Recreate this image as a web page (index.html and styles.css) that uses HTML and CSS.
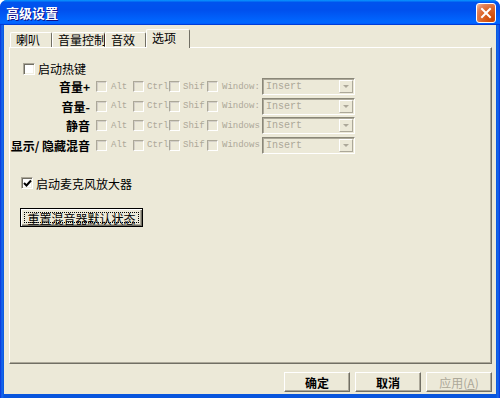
FILE: index.html
```html
<!DOCTYPE html>
<html lang="zh-CN">
<head>
    <meta charset="UTF-8">
    <title>高级设置</title>
    <link rel="stylesheet" href="styles.css">
</head>
<body>
    <div class="window">
        <div class="titlebar">
            <span class="title">高级设置</span>
            <span class="close">
                <svg width="12" height="12" viewBox="0 0 12 12">
                    <path d="M2 2 L10 10 M10 2 L2 10" stroke="#fff" stroke-width="2" stroke-linecap="square"/>
                </svg>
            </span>
        </div>
        <div class="client">
            <div class="tabs">
                <div class="tab t1">喇叭</div>
                <div class="tab t2">音量控制</div>
                <div class="tab t3">音效</div>
                <div class="tab active">选项</div>
            </div>
            <div class="panel">
                <label class="check-line hot"><span class="box"></span>启动热键</label>

                <div class="hotkeys">
                    <div class="hk-label">音量+</div>
                    <div class="opt w1"><span class="box dis"></span>Alt</div>
                    <div class="opt w2"><span class="box dis"></span>Ctrl</div>
                    <div class="opt w3"><span class="box dis"></span>Shif</div>
                    <div class="opt w4"><span class="box dis"></span>Window:</div>
                    <div class="combo"><span class="combo-text">Insert</span><span class="combo-btn"><span class="arrow"></span></span></div>

                    <div class="hk-label">音量-</div>
                    <div class="opt w1"><span class="box dis"></span>Alt</div>
                    <div class="opt w2"><span class="box dis"></span>Ctrl</div>
                    <div class="opt w3"><span class="box dis"></span>Shif</div>
                    <div class="opt w4"><span class="box dis"></span>Window:</div>
                    <div class="combo"><span class="combo-text">Insert</span><span class="combo-btn"><span class="arrow"></span></span></div>

                    <div class="hk-label">静音</div>
                    <div class="opt w1"><span class="box dis"></span>Alt</div>
                    <div class="opt w2"><span class="box dis"></span>Ctrl</div>
                    <div class="opt w3"><span class="box dis"></span>Shif</div>
                    <div class="opt w4"><span class="box dis"></span>Windows</div>
                    <div class="combo"><span class="combo-text">Insert</span><span class="combo-btn"><span class="arrow"></span></span></div>

                    <div class="hk-label">显示/ 隐藏混音</div>
                    <div class="opt w1"><span class="box dis"></span>Alt</div>
                    <div class="opt w2"><span class="box dis"></span>Ctrl</div>
                    <div class="opt w3"><span class="box dis"></span>Shif</div>
                    <div class="opt w4"><span class="box dis"></span>Windows</div>
                    <div class="combo"><span class="combo-text">Insert</span><span class="combo-btn"><span class="arrow"></span></span></div>
                </div>

                <label class="check-line mic">
                    <span class="box">
                        <svg width="9" height="9" viewBox="0 0 9 9">
                            <path d="M1 4 L3.5 6.5 L8 1.5" stroke="#000" stroke-width="2" fill="none"/>
                        </svg>
                    </span>启动麦克风放大器
                </label>

                <button class="reset"><span class="focus">重置混音器默认状态</span></button>
            </div>
            <div class="actions">
                <button class="btn">确定</button>
                <button class="btn">取消</button>
                <button class="btn" disabled>应用(<u>A</u>)</button>
            </div>
        </div>
    </div>
</body>
</html>
```

FILE: styles.css
```css
* {
    box-sizing: border-box;
}
body {
    margin: 0;
    background: #fff;
    font-family: "Noto Sans CJK SC", sans-serif;
    font-size: 12px;
    color: #000;
}
.window {
    width: 500px;
    height: 398px;
    display: flex;
    flex-direction: column;
    background: linear-gradient(to right, #0831d9 0, #166aee 2px, #0855dd 4px, #0855dd 496px, #166aee 498px, #0831d9 500px);
    border-radius: 7px 7px 0 0;
    overflow: hidden;
}
.titlebar {
    height: 25px;
    flex: none;
    display: flex;
    align-items: center;
    justify-content: space-between;
    padding: 0 4px 0 6px;
    background: linear-gradient(to bottom, #0997ff 0%, #0053ee 10%, #0050ee 40%, #0066ff 85%, #0066ff 92%, #005bff 95%, #003dd7 97%, #003dd7 100%);
}
.title {
    color: #fff;
    font-weight: bold;
    font-size: 13px;
    text-shadow: 1px 1px #0f1089;
}
.close {
    width: 20px;
    height: 20px;
    border: 1px solid #fff;
    border-radius: 3px;
    background: radial-gradient(circle at 85% 85%, #cc4600 0%, #dc6527 50%, #e28158 75%, #f4bea5 100%);
    display: flex;
    align-items: center;
    justify-content: center;
}
.client {
    flex: 1;
    margin: 0 4px 4px 4px;
    background: #ece9d8;
    display: flex;
    flex-direction: column;
    padding-top: 4px;
}
.tabs {
    display: flex;
    align-items: flex-end;
    height: 18px;
    margin-left: 6px;
    position: relative;
    z-index: 1;
}
.tab {
    height: 15px;
    line-height: 13px;
    padding-left: 5px;
    border: 1px solid;
    border-color: #fff #716f64 transparent #fff;
    border-bottom: none;
    border-radius: 2px 2px 0 0;
    background: #ece9d8;
    white-space: nowrap;
}
.t1 {
    width: 42px;
}
.t2 {
    width: 53px;
}
.t3 {
    width: 41px;
}
.tab.active {
    width: 44px;
    height: 19px;
    margin-bottom: -1px;
    line-height: 15px;
}
.panel {
    flex: 1;
    margin: 0 4px 0 5px;
    border: 1px solid;
    border-color: #fff #716f64 #716f64 #fff;
    box-shadow: inset -1px -1px #aca899;
    display: flex;
    flex-direction: column;
    align-items: flex-start;
}
.check-line {
    display: flex;
    align-items: center;
    gap: 3px;
    height: 13px;
    white-space: nowrap;
}
.hot {
    margin: 14px 0 0 13px;
}
.mic {
    margin: 23px 0 0 11px;
}
.box {
    width: 12px;
    height: 12px;
    flex: none;
    background: #fff;
    border: 1px solid;
    border-color: #aca899 #fff #fff #aca899;
    box-shadow: inset 1px 1px #716f64, inset -1px -1px #f1efe2;
    display: flex;
    align-items: center;
    justify-content: center;
}
.box.dis {
    width: 11px;
    height: 11px;
    background: #ece9d8;
    border-color: #aca899 #fff #fff #aca899;
    box-shadow: inset 1px 1px #d4d0c8;
}
.hotkeys {
    margin-top: 3px;
    display: grid;
    grid-template-columns: 86px 37px 36px 38px 55px 93px;
    grid-auto-rows: 17px;
    row-gap: 2.6px;
    align-items: center;
}
.hk-label {
    text-align: right;
    padding-right: 6px;
    font-weight: bold;
    white-space: nowrap;
}
.opt {
    display: flex;
    align-items: center;
    gap: 4px;
    white-space: nowrap;
    color: #aca899;
    font-family: "Liberation Mono", "DejaVu Sans Mono", monospace;
    font-size: 9px;
}
.w2,
.w3 {
    gap: 3px;
}
.combo {
    height: 17px;
    display: flex;
    align-items: center;
    border: 1px solid;
    border-color: #8a8778 #fff #fff #8a8778;
    box-shadow: inset 1px 1px #aca899;
    padding: 1px;
    background: #ece9d8;
}
.combo-text {
    flex: 1;
    padding-left: 2px;
    color: #aca899;
    font-family: "Liberation Mono", "DejaVu Sans Mono", monospace;
    font-size: 10px;
}
.combo-btn {
    width: 14px;
    height: 13px;
    border: 1px solid;
    border-color: #fff #aca899 #aca899 #fff;
    display: flex;
    align-items: center;
    justify-content: center;
}
.arrow {
    width: 0;
    height: 0;
    border-left: 3px solid transparent;
    border-right: 3px solid transparent;
    border-top: 3px solid #aca899;
}
button {
    font-family: "Noto Sans CJK SC", sans-serif;
    font-size: 12px;
    background: #ece9d8;
    color: #000;
    padding: 0;
}
.reset {
    margin: 18px 0 0 10px;
    width: 123px;
    height: 19px;
    border: 1px solid #000;
    box-shadow: inset 1px 1px #fff, inset -1px -1px #716f64, inset -2px -2px #aca899;
    padding: 3px;
    display: flex;
}
.focus {
    flex: 1;
    border: 1px dotted #000;
    line-height: 11px;
    text-align: center;
}
.actions {
    height: 30px;
    flex: none;
    display: flex;
    justify-content: flex-end;
    gap: 5px;
    padding: 8px 4px 2px 0;
}
.btn {
    width: 66px;
    height: 20px;
    border: 1px solid;
    border-color: #fff #716f64 #716f64 #fff;
    box-shadow: inset -1px -1px #aca899;
    font-weight: bold;
}
.btn:disabled {
    color: #aca899;
    font-weight: normal;
}
```
